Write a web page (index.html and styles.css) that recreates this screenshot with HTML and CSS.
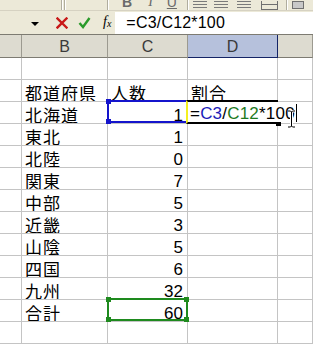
FILE: index.html
```html
<!DOCTYPE html>
<html lang="ja">
<head>
    <meta charset="UTF-8">
    <title>Excel</title>
    <link rel="stylesheet" href="styles.css">
</head>
<body>
    <div class="app">
        <div class="toolbar">
            <span class="tb-sep" style="margin-left:61px"></span>
            <span class="tb-sep" style="margin-left:2px"></span>
            <span class="tb-sep" style="margin-left:42px"></span>
            <span class="tb-glyph bold" style="margin-left:14px">B</span>
            <span class="tb-glyph ital" style="margin-left:16px">I</span>
            <span class="tb-glyph under" style="margin-left:14px">U</span>
            <span class="tb-sep" style="margin-left:10px"></span>
            <span class="tb-lines" style="margin-left:5px"></span>
            <span class="tb-lines" style="margin-left:7px"></span>
            <span class="tb-lines" style="margin-left:9px"></span>
            <span class="tb-merge" style="margin-left:10px"></span>
            <span class="tb-sep" style="margin-left:8px"></span>
            <span class="tb-small" style="margin-left:5px"></span>
        </div>

        <div class="formula-bar">
            <span class="name-arrow"></span>
            <svg class="fb-icon cancel" width="12" height="12" viewBox="0 0 12 12">
                <path d="M1.5 1.5 L10.5 10.5 M10.5 1.5 L1.5 10.5" stroke="#c81818" stroke-width="2.4" stroke-linecap="square"/>
            </svg>
            <svg class="fb-icon enter" width="13" height="12" viewBox="0 0 13 12">
                <path d="M1.5 6 L5 10 L11.5 1" stroke="#2a9a2a" stroke-width="2.4" fill="none"/>
            </svg>
            <span class="fx">f<sub>x</sub></span>
            <div class="formula-input">=C3/C12*100</div>
        </div>

        <div class="sheet">
            <div class="col-headers">
                <div class="hcell"></div>
                <div class="hcell">B</div>
                <div class="hcell">C</div>
                <div class="hcell selected">D</div>
                <div class="hcell"></div>
            </div>

            <div class="grid" id="grid"></div>

            <!-- range highlights while editing D3 -->
            <div class="range blue">
                <span class="handle tl"></span>
                <span class="handle bl"></span>
            </div>
            <div class="range green">
                <span class="handle tl"></span>
                <span class="handle bl"></span>
                <span class="handle tr"></span>
                <span class="handle br"></span>
            </div>

            <div class="editor">
                <span class="edit-text">=<span class="ref-blue">C3</span>/<span class="ref-green">C12</span>*100</span>
                <span class="caret"></span>
                <span class="fill-handle"></span>
            </div>

            <svg class="ibeam" width="9" height="18" viewBox="0 0 9 18">
                <path d="M1 1 H3.5 L4.5 2 L5.5 1 H8 M4.5 2 V16 M1 17 H3.5 L4.5 16 L5.5 17 H8" stroke="#fff" stroke-width="3" fill="none"/>
                <path d="M1 1 H3.5 L4.5 2 L5.5 1 H8 M4.5 2 V16 M1 17 H3.5 L4.5 16 L5.5 17 H8" stroke="#000" stroke-width="1" fill="none"/>
            </svg>
        </div>
    </div>

    <script>
        const rows = [
            ['', '', ''],
            ['都道府県', '人数', '割合'],
            ['北海道', '1', ''],
            ['東北', '1', ''],
            ['北陸', '0', ''],
            ['関東', '7', ''],
            ['中部', '5', ''],
            ['近畿', '3', ''],
            ['山陰', '5', ''],
            ['四国', '6', ''],
            ['九州', '32', ''],
            ['合計', '60', ''],
            ['', '', '']
        ];

        const grid = document.getElementById('grid');
        rows.forEach(r => {
            const isHeader = r[1] === '人数';
            grid.innerHTML += `
                <div class="cell"></div>
                <div class="cell jp">${r[0]}</div>
                <div class="cell ${isHeader ? 'jp' : 'num'}">${r[1]}</div>
                <div class="cell jp">${r[2]}</div>
                <div class="cell"></div>
            `;
        });
    </script>
</body>
</html>
```

FILE: styles.css
```css
:root {
    --face: #ece9d8;
    --grid-line: #c4c4c4;
    --header-bg: #dddbd0;
    --header-line: #9c9a90;
}

body {
    margin: 0;
    background: #fff;
    font-family: "Liberation Sans", "Noto Sans CJK JP", sans-serif;
    color: #000;
}

.app {
    width: 313px;
    height: 345px;
    overflow: hidden;
    position: relative;
}

/* toolbar, mostly scrolled out of view */
.toolbar {
    height: 10px;
    background: var(--face);
    border-bottom: 1px solid #d6d2c2;
    display: flex;
    align-items: flex-end;
    overflow: hidden;
}

.tb-sep {
    flex: none;
    width: 1px;
    height: 10px;
    background: #b0ad9e;
    box-shadow: 1px 0 0 #fff;
}

.tb-glyph {
    flex: none;
    font-size: 14px;
    line-height: 14px;
    height: 14px;
    margin-bottom: 1px;
    color: #6a6a6a;
}

.bold { font-weight: bold; }
.ital { font-style: italic; font-family: "Liberation Serif", serif; }
.under { text-decoration: underline; }

.tb-lines {
    flex: none;
    width: 14px;
    height: 8px;
    margin-bottom: 1px;
    background: linear-gradient(#7a7a7a 0 1px, transparent 1px 3px, #7a7a7a 3px 4px, transparent 4px 6px, #7a7a7a 6px 7px, transparent 7px);
}

.tb-merge {
    flex: none;
    width: 15px;
    height: 8px;
    margin-bottom: 0;
    border: 1px solid #6f6f6f;
    border-top: none;
    background: linear-gradient(transparent 3px, #6f6f6f 3px 4px, transparent 4px);
}

.tb-small {
    flex: none;
    width: 10px;
    height: 6px;
    margin-bottom: 1px;
    border: 1px solid #707070;
    background: #c8c8c8;
}

/* formula bar */
.formula-bar {
    height: 23px;
    background: var(--face);
    display: flex;
    align-items: center;
}

.name-arrow {
    flex: none;
    margin-left: 31px;
    margin-top: 2px;
    width: 0;
    height: 0;
    border-left: 4px solid transparent;
    border-right: 4px solid transparent;
    border-top: 4px solid #000;
}

.fb-icon {
    flex: none;
    margin-top: 1px;
}

.cancel { margin-left: 17px; }
.enter { margin-left: 10px; }

.fx {
    flex: none;
    margin-left: 12px;
    font-family: "Liberation Serif", serif;
    font-style: italic;
    font-size: 14px;
    line-height: 14px;
}

.fx sub {
    font-size: 10px;
    vertical-align: -1px;
}

.formula-input {
    align-self: flex-end;
    margin-left: 4px;
    flex: 1;
    height: 22px;
    background: #fff;
    box-sizing: border-box;
    padding: 2px 0 0 11px;
    font-size: 16px;
    line-height: 18px;
    letter-spacing: 0.2px;
}

/* sheet */
.sheet {
    position: relative;
}

.col-headers {
    display: grid;
    grid-template-columns: 22px 86px 80px 90px 35px;
    border-top: 1px solid #7d7b72;
}

.hcell {
    height: 23px;
    box-sizing: border-box;
    background: var(--header-bg);
    border-right: 1px solid var(--header-line);
    border-bottom: 1px solid #7d7b72;
    display: flex;
    align-items: center;
    justify-content: center;
    font-size: 16px;
    color: #3a3a3a;
    padding-top: 1px;
}

.hcell.selected {
    background: #b6c1dc;
    border-right-color: #142466;
    border-bottom-color: #142466;
}

.grid {
    display: grid;
    grid-template-columns: 22px 86px 80px 90px 35px;
    grid-auto-rows: 22px;
}

.cell {
    box-sizing: border-box;
    border-right: 1px solid var(--grid-line);
    border-bottom: 1px solid var(--grid-line);
    display: flex;
    align-items: flex-end;
    padding: 0 3px 2px 3px;
    font-size: 17px;
    line-height: 15px;
    white-space: nowrap;
    overflow: hidden;
}

.jp {
    font-family: "Noto Sans CJK JP", sans-serif;
    letter-spacing: 1px;
    padding-bottom: 1px;
}

.num {
    justify-content: flex-end;
    line-height: 13px;
    padding-right: 4px;
    padding-bottom: 1px;
}

/* reference ranges */
.range {
    position: absolute;
    left: 107px;
    width: 81px;
    height: 23px;
    box-sizing: border-box;
    border: 2px solid;
}

.range.blue {
    top: 66px;
    border-color: #1414cc;
}

.range.green {
    top: 264px;
    border-color: #1e8a1e;
}

.handle {
    position: absolute;
    width: 5px;
    height: 5px;
    background: currentColor;
}

.range.blue .handle { color: #1414cc; }
.range.green .handle { color: #1e8a1e; }

.tl { left: -3px; top: -3px; }
.bl { left: -3px; bottom: -3px; }
.tr { right: -3px; top: -3px; }
.br { right: -3px; bottom: -3px; }

/* in-cell editor on D3 */
.editor {
    position: absolute;
    left: 186px;
    top: 66px;
    width: 92px;
    height: 24px;
    box-sizing: border-box;
    border-top: 2px solid #000;
    border-bottom: 2px solid #000;
    border-left: 2px solid #f4f020;
    background: #fff;
    display: flex;
    align-items: flex-end;
}

.edit-text {
    margin-left: 2px;
    padding-right: 3px;
    padding-bottom: 1px;
    background: #fff;
    font-size: 17px;
    line-height: 15px;
    white-space: nowrap;
    letter-spacing: 0.2px;
}

.ref-blue { color: #1c1cb8; }
.ref-green { color: #1e7a1e; }

.caret {
    position: absolute;
    left: 108px;
    top: 2px;
    width: 1px;
    height: 18px;
    background: #000;
}

.fill-handle {
    position: absolute;
    right: -3px;
    bottom: -4px;
    width: 5px;
    height: 4px;
    background: #000;
}

.ibeam {
    position: absolute;
    left: 287px;
    top: 76px;
}
```
